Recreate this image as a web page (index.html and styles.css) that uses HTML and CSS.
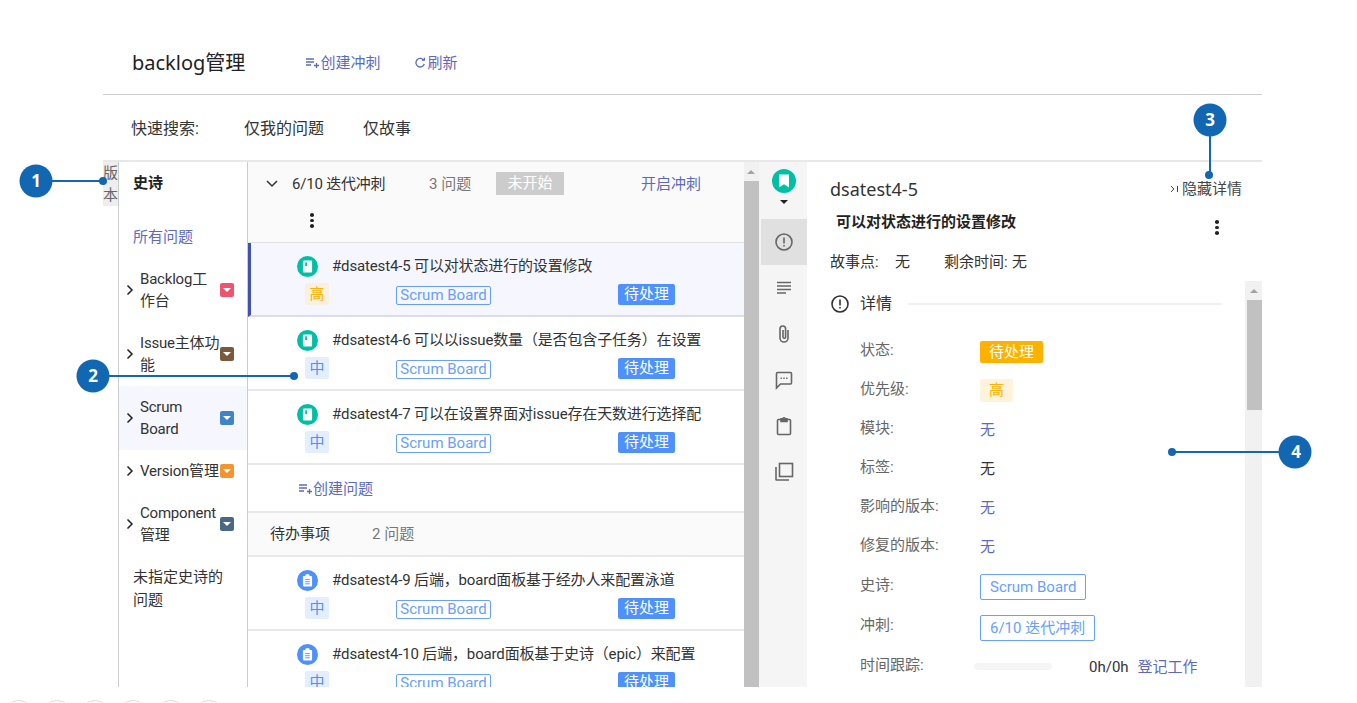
FILE: index.html
```html
<!DOCTYPE html>
<html lang="zh">

<head>
    <meta charset="utf-8">
    <title>backlog管理</title>
    <link rel="stylesheet" href="styles.css">
</head>

<body>
    <div class="page">
        <header class="page__head">
            <h1 class="page__title">backlog管理</h1>
            <a class="head-link head-link--sprint">
                <svg class="head-link__icon" width="14" height="14" viewBox="0 0 14 14">
                    <path d="M1 3h8M1 6h8M1 9h5M9 9.5h5M11.500 7v5" fill="none" stroke="currentColor" stroke-width="1.300" />
                </svg>创建冲刺
            </a>
            <a class="head-link">
                <svg class="head-link__icon" width="12" height="14" viewBox="0 0 12 14">
                    <path d="M9.800 4.300A4.300 4.300 0 1 0 10.300 8" fill="none" stroke="currentColor" stroke-width="1.300" />
                    <path d="M7.500 4.800h3.500V1.300z" fill="currentColor" />
                </svg>刷新
            </a>
        </header>

        <div class="quick-search">
            <span class="quick-search__label">快速搜索:</span>
            <span class="quick-search__item">仅我的问题</span>
            <span class="quick-search__item">仅故事</span>
        </div>

        <div class="board">
            <div class="version-tab">版<br>本</div>

            <aside class="epics">
                <div class="epics__title">史诗</div>
                <div class="epics__all">所有问题</div>
                <div class="epic">
                    <svg class="epic__arrow" width="8" height="12" viewBox="0 0 8 12"><path d="M1.500 1.500 6 6l-4.500 4.500" /></svg>
                    <span class="epic__name">Backlog工<br>作台</span>
                    <span class="epic__chip epic__chip--red"></span>
                </div>
                <div class="epic">
                    <svg class="epic__arrow" width="8" height="12" viewBox="0 0 8 12"><path d="M1.500 1.500 6 6l-4.500 4.500" /></svg>
                    <span class="epic__name">Issue主体功<br>能</span>
                    <span class="epic__chip epic__chip--brown"></span>
                </div>
                <div class="epic epic--active">
                    <svg class="epic__arrow" width="8" height="12" viewBox="0 0 8 12"><path d="M1.500 1.500 6 6l-4.500 4.500" /></svg>
                    <span class="epic__name">Scrum<br>Board</span>
                    <span class="epic__chip epic__chip--blue"></span>
                </div>
                <div class="epic">
                    <svg class="epic__arrow" width="8" height="12" viewBox="0 0 8 12"><path d="M1.500 1.500 6 6l-4.500 4.500" /></svg>
                    <span class="epic__name">Version管理</span>
                    <span class="epic__chip epic__chip--orange"></span>
                </div>
                <div class="epic">
                    <svg class="epic__arrow" width="8" height="12" viewBox="0 0 8 12"><path d="M1.500 1.500 6 6l-4.500 4.500" /></svg>
                    <span class="epic__name">Component<br>管理</span>
                    <span class="epic__chip epic__chip--slate"></span>
                </div>
                <div class="epics__none">未指定史诗的问题</div>
            </aside>

            <main class="issues">
                <section class="sprint-head">
                    <div class="sprint-head__row">
                        <svg class="sprint-head__arrow" width="12" height="8" viewBox="0 0 12 8"><path d="M1 1l5 5 5-5" /></svg>
                        <span class="sprint-head__name">6/10 迭代冲刺</span>
                        <span class="sprint-head__count">3 问题</span>
                        <span class="sprint-head__state">未开始</span>
                        <a class="sprint-head__start">开启冲刺</a>
                    </div>
                    <div class="dots dots--sprint"><i></i><i></i><i></i></div>
                </section>

                <article class="issue issue--selected">
                    <div class="issue__line">
                        <span class="type type--story"><svg width="12" height="14" viewBox="0 0 12 14"><path d="M1 1.500A1 1 0 0 1 2 .500h8a1 1 0 0 1 1 1v11a1 1 0 0 1-1 1H2a1 1 0 0 1-1-1z" fill="#fff" /><rect x="3.500" y="2.500" width="2" height="4" fill="#00bfa5" /></svg></span>
                        <span class="issue__title">#dsatest4-5 可以对状态进行的设置修改</span>
                    </div>
                    <div class="issue__meta">
                        <span class="prio prio--high prio--tint">高</span>
                        <span class="tag tag--epic">Scrum Board</span>
                        <span class="status">待处理</span>
                    </div>
                </article>
                <article class="issue">
                    <div class="issue__line">
                        <span class="type type--story"><svg width="12" height="14" viewBox="0 0 12 14"><path d="M1 1.500A1 1 0 0 1 2 .500h8a1 1 0 0 1 1 1v11a1 1 0 0 1-1 1H2a1 1 0 0 1-1-1z" fill="#fff" /><rect x="3.500" y="2.500" width="2" height="4" fill="#00bfa5" /></svg></span>
                        <span class="issue__title">#dsatest4-6 可以以issue数量（是否包含子任务）在设置</span>
                    </div>
                    <div class="issue__meta">
                        <span class="prio prio--mid">中</span>
                        <span class="tag tag--epic">Scrum Board</span>
                        <span class="status">待处理</span>
                    </div>
                </article>
                <article class="issue">
                    <div class="issue__line">
                        <span class="type type--story"><svg width="12" height="14" viewBox="0 0 12 14"><path d="M1 1.500A1 1 0 0 1 2 .500h8a1 1 0 0 1 1 1v11a1 1 0 0 1-1 1H2a1 1 0 0 1-1-1z" fill="#fff" /><rect x="3.500" y="2.500" width="2" height="4" fill="#00bfa5" /></svg></span>
                        <span class="issue__title">#dsatest4-7 可以在设置界面对issue存在天数进行选择配</span>
                    </div>
                    <div class="issue__meta">
                        <span class="prio prio--mid">中</span>
                        <span class="tag tag--epic">Scrum Board</span>
                        <span class="status">待处理</span>
                    </div>
                </article>

                <div class="add-issue">
                    <a class="head-link">
                        <svg class="head-link__icon" width="14" height="14" viewBox="0 0 14 14">
                            <path d="M1 3h8M1 6h8M1 9h5M9 9.500h5M11.500 7v5" fill="none" stroke="currentColor" stroke-width="1.300" />
                        </svg>创建问题
                    </a>
                </div>

                <section class="backlog-head">
                    <span class="backlog-head__name">待办事项</span>
                    <span class="sprint-head__count">2 问题</span>
                </section>

                <article class="issue">
                    <div class="issue__line">
                        <span class="type type--task"><svg width="12" height="14" viewBox="0 0 12 14"><path d="M1 3a1 1 0 0 1 1-1h1.500a2.500 2 0 0 1 5 0H10a1 1 0 0 1 1 1v9.500a1 1 0 0 1-1 1H2a1 1 0 0 1-1-1z" fill="#fff" /><path d="M3.500 6h5M3.500 8.300h5M3.500 10.600h5" stroke="#4d90fe" /></svg></span>
                        <span class="issue__title">#dsatest4-9 后端，board面板基于经办人来配置泳道</span>
                    </div>
                    <div class="issue__meta">
                        <span class="prio prio--mid">中</span>
                        <span class="tag tag--epic">Scrum Board</span>
                        <span class="status">待处理</span>
                    </div>
                </article>
                <article class="issue">
                    <div class="issue__line">
                        <span class="type type--task"><svg width="12" height="14" viewBox="0 0 12 14"><path d="M1 3a1 1 0 0 1 1-1h1.500a2.500 2 0 0 1 5 0H10a1 1 0 0 1 1 1v9.500a1 1 0 0 1-1 1H2a1 1 0 0 1-1-1z" fill="#fff" /><path d="M3.500 6h5M3.500 8.300h5M3.500 10.600h5" stroke="#4d90fe" /></svg></span>
                        <span class="issue__title">#dsatest4-10 后端，board面板基于史诗（epic）来配置</span>
                    </div>
                    <div class="issue__meta">
                        <span class="prio prio--mid">中</span>
                        <span class="tag tag--epic">Scrum Board</span>
                        <span class="status">待处理</span>
                    </div>
                </article>
            </main>

            <div class="scrollbar scrollbar--list">
                <span class="scrollbar__arrow"></span>
                <span class="scrollbar__thumb scrollbar__thumb--list"></span>
            </div>

            <nav class="rail">
                <div class="rail__type">
                    <span class="rail__badge"><svg width="12" height="14" viewBox="0 0 12 14"><path d="M1 .500h10v13L6 10.300 1 13.500z" fill="#fff" /></svg></span>
                    <span class="rail__caret"></span>
                </div>
                <div class="rail__item rail__item--active">
                    <svg width="20" height="20" viewBox="0 0 20 20"><circle cx="10" cy="10" r="8" /><path d="M10 5.500v6M10 13v1.500" /></svg>
                </div>
                <div class="rail__item">
                    <svg width="20" height="20" viewBox="0 0 20 20"><path d="M3 4.500h14M3 8h14M3 11.500h14M3 15h9" /></svg>
                </div>
                <div class="rail__item">
                    <svg width="20" height="20" viewBox="0 0 20 20"><path d="M14 6v8a4 4 0 0 1-8 0V4.800a2.800 2.800 0 0 1 5.600 0V13a1.300 1.300 0 0 1-2.600 0V6" /></svg>
                </div>
                <div class="rail__item">
                    <svg width="20" height="20" viewBox="0 0 20 20"><path d="M2.500 18V3.500a1 1 0 0 1 1-1h13a1 1 0 0 1 1 1V13a1 1 0 0 1-1 1H6.500z" /><path d="M6.500 8.300h1.400M9.300 8.300h1.400M12.100 8.300h1.400" /></svg>
                </div>
                <div class="rail__item">
                    <svg width="20" height="20" viewBox="0 0 20 20"><path d="M7 3.500H4.500a1 1 0 0 0-1 1v13a1 1 0 0 0 1 1h11a1 1 0 0 0 1-1v-13a1 1 0 0 0-1-1H13" /><path d="M7 5.500V2.800h2a1 1 0 0 1 2 0h2v2.700z" fill="#666" /></svg>
                </div>
                <div class="rail__item">
                    <svg width="20" height="20" viewBox="0 0 20 20"><rect x="5.500" y="1.500" width="13" height="13" /><path d="M2 5v12.500a.5.500 0 0 0 .5.500H15" /></svg>
                </div>
            </nav>

            <div class="detail">
                <div class="detail__top">
                    <span class="detail__key">dsatest4-5</span>
                    <a class="detail__hide">
                        <svg width="9" height="8" viewBox="0 0 9 8"><path d="M1 1l2.800 3L1 7M7.500 1v6" /></svg>隐藏详情
                    </a>
                </div>
                <div class="detail__titlebar">
                    <span class="detail__title">可以对状态进行的设置修改</span>
                    <div class="dots"><i></i><i></i><i></i></div>
                </div>
                <div class="detail__stats">
                    <span class="detail__stat">故事点:</span><span class="detail__statval">无</span>
                    <span class="detail__stat detail__stat--time">剩余时间:</span><span>无</span>
                </div>
                <div class="detail__scroll">
                    <div class="fields">
                        <div class="fields__head">
                            <svg width="20" height="20" viewBox="0 0 20 20"><circle cx="10" cy="10" r="8" /><path d="M10 5.500v6M10 13v1.500" /></svg>
                            <span class="fields__title">详情</span>
                            <span class="fields__rule"></span>
                        </div>
                        <div class="field"><span class="field__label">状态:</span><span class="status status--todo">待处理</span></div>
                        <div class="field"><span class="field__label">优先级:</span><span class="prio prio--high prio--big">高</span></div>
                        <div class="field"><span class="field__label">模块:</span><a class="field__link">无</a></div>
                        <div class="field"><span class="field__label">标签:</span><span>无</span></div>
                        <div class="field"><span class="field__label">影响的版本:</span><a class="field__link">无</a></div>
                        <div class="field"><span class="field__label">修复的版本:</span><a class="field__link">无</a></div>
                        <div class="field field--tag"><span class="field__label">史诗:</span><span class="tag tag--field">Scrum Board</span></div>
                        <div class="field field--tag"><span class="field__label">冲刺:</span><span class="tag tag--field">6/10 迭代冲刺</span></div>
                        <div class="field">
                            <span class="field__label">时间跟踪:</span>
                            <span class="timebar"></span>
                            <span class="timebar__text">0h/0h</span>
                            <a class="field__link">登记工作</a>
                        </div>
                    </div>
                    <div class="scrollbar scrollbar--detail">
                        <span class="scrollbar__arrow"></span>
                        <span class="scrollbar__thumb"></span>
                    </div>
                </div>
            </div>
        </div>
    </div>

    <div class="steps">
        <span></span><span></span><span></span><span></span><span></span><span></span>
    </div>

    <!-- numbered callouts sitting on top of the screenshot -->
    <svg class="callouts" width="1357" height="703" viewBox="0 0 1357 703">
        <g class="callouts__mark">
            <path d="M36 181H103M93 376H294M1210 120V175M1295 452H1172" />
            <circle cx="36" cy="181" r="16.500" />
            <circle cx="103" cy="181" r="4" />
            <circle cx="93" cy="376" r="16.500" />
            <circle cx="294" cy="376" r="4" />
            <circle cx="1210" cy="120" r="16.500" />
            <circle cx="1209" cy="175" r="4" />
            <circle cx="1295" cy="452" r="16.500" />
            <circle cx="1172" cy="452" r="4" />
        </g>
        <g class="callouts__num">
            <text x="36" y="187">1</text>
            <text x="93" y="382">2</text>
            <text x="1210" y="126">3</text>
            <text x="1296" y="458">4</text>
        </g>
    </svg>
</body>

</html>
```

FILE: styles.css
```css
*,
*::after,
*::before {
    box-sizing: border-box;
}

body {
    margin: 0;
    height: 703px;
    overflow: hidden;
    position: relative;
    background: #fff;
    color: #333;
    font-family: Roboto, "Noto Sans CJK SC", sans-serif;
    font-size: 15px;
    line-height: 22px;
}

a {
    color: #3f51b5;
}

.page {
    width: 1159px;
    height: 687px;
    margin-left: 103px;
    display: flex;
    flex-direction: column;
    overflow: hidden;
}

.page__head {
    height: 95px;
    flex: none;
    display: flex;
    align-items: center;
    padding: 31px 0 0 29px;
    border-bottom: 1px solid #ccc;
}

.page__title {
    margin: 0 60px 0 0;
    font-family: "Noto Sans", "Noto Sans CJK SC", sans-serif;
    font-size: 20px;
    font-weight: 400;
    color: #222;
}

.head-link {
    display: inline-flex;
    align-items: center;
    color: #3f51b5;
    opacity: .85;
}

.head-link--sprint {
    margin-right: 34px;
}

.head-link__icon {
    margin-right: 1px;
}

.quick-search {
    height: 67px;
    flex: none;
    display: flex;
    align-items: center;
    padding: 2px 0 0 28px;
    border-bottom: 2px solid #e8e8e8;
    font-size: 16px;
}

.quick-search__label {
    margin-right: 45px;
}

.quick-search__item {
    margin-right: 39px;
}

.board {
    flex: 1;
    min-height: 0;
    display: flex;
}

.version-tab {
    width: 15px;
    height: 44px;
    flex: none;
    background: #eee;
    color: #666;
    text-align: center;
}

.epics {
    width: 130px;
    flex: none;
    border-left: 1px solid #ccc;
    border-right: 1px solid #ccc;
}

.epics__title {
    padding: 10px 0 0 14px;
    font-weight: 700;
    color: #222;
}

.epics__all {
    padding: 32px 0 10px 14px;
    color: #3f51b5;
    opacity: .85;
}

.epics__none {
    padding: 10px 14px;
    line-height: 23px;
}

.epic {
    display: flex;
    align-items: center;
    padding: 10px 13px 10px 7px;
    min-height: 42px;
}

.epic--active {
    background: #f5f6fe;
}

.epic__arrow {
    flex: none;
    fill: none;
    stroke: #222;
    stroke-width: 1.500;
}

.epic__name {
    width: 80px;
    margin-left: 6px;
    margin-right: 1px;
    white-space: nowrap;
    letter-spacing: -.2px;
}

.epic__chip {
    width: 14px;
    height: 14px;
    flex: none;
    border-radius: 2px;
    position: relative;
}

/* little white caret inside the epic colour chip */
.epic__chip::after {
    content: "";
    position: absolute;
    left: 3px;
    top: 5px;
    border: 4px solid transparent;
    border-top: 4px solid #fff;
    border-bottom: 0;
}

.epic__chip--red {
    background: #f0536e;
}

.epic__chip--brown {
    background: #7b5a3c;
}

.epic__chip--blue {
    background: #3f84c8;
}

.epic__chip--orange {
    background: #f7932e;
}

.epic__chip--slate {
    background: #4a6785;
}

.issues {
    width: 496px;
    flex: none;
    overflow: hidden;
}

.sprint-head {
    height: 81px;
    background: #fafafa;
    border-bottom: 1px solid #e0e0e0;
    padding: 10px 0 0 18px;
}

.sprint-head__row {
    display: flex;
    align-items: center;
    height: 23px;
}

.sprint-head__arrow {
    flex: none;
    fill: none;
    stroke: #333;
    stroke-width: 1.500;
    margin-right: 14px;
}

.sprint-head__name {
    width: 137px;
    letter-spacing: -.2px;
}

.sprint-head__count {
    width: 67px;
    color: #777;
}

.sprint-head__state {
    width: 68px;
    height: 23px;
    background: #ccc;
    color: #fff;
    text-align: center;
    line-height: 23px;
}

.sprint-head__start {
    margin-left: 77px;
    color: #3f51b5;
    opacity: .85;
}

.dots {
    display: flex;
    flex-direction: column;
    gap: 2px;
    width: 4px;
}

.dots i {
    width: 4px;
    height: 3.500px;
    border-radius: 50%;
    background: #222;
}

.dots--sprint {
    margin: 18px 0 0 44px;
}

.issue {
    height: 74px;
    border-bottom: 2px solid #e8e8e8;
    padding: 13px 0 0 49px;
}

.issue--selected {
    background: #f5f6fe;
    border-left: 3px solid #3f51b5;
    border-bottom-color: #dcdcec;
    padding-left: 46px;
}

.issue__line {
    display: flex;
    align-items: center;
    height: 20px;
}

.issue__title {
    margin-left: 14px;
    white-space: nowrap;
    letter-spacing: -.15px;
}

.type {
    width: 21px;
    height: 21px;
    flex: none;
    border-radius: 50%;
    display: flex;
    align-items: center;
    justify-content: center;
}

.type svg {
    width: 11px;
    height: 13px;
}

.type--story {
    background: #00bfa5;
}

.type--task {
    background: #4d90fe;
}

.issue__meta {
    display: flex;
    align-items: center;
    height: 24px;
    margin: 6px 0 0 8px;
}

.prio {
    width: 24px;
    height: 22px;
    line-height: 22px;
    text-align: center;
    border-radius: 2px;
    flex: none;
}

.prio--high {
    background: #fff3dc;
    color: #ffb100;
}

.prio--tint {
    background: #faf0e2;
}

.prio--mid {
    background: #e3eeff;
    color: #4d90fe;
}

.prio--big {
    width: 33px;
    height: 23px;
    line-height: 23px;
}

.tag {
    border: 1px solid #4d90fe;
    border-radius: 2px;
    color: #4d90fe;
    white-space: nowrap;
}

.tag--epic {
    width: 95px;
    height: 19px;
    line-height: 17px;
    text-align: center;
    margin: 2px 0 0 67px;
    opacity: .85;
}

.tag--epic ~ .status {
    margin-left: 127px;
}

.tag--field {
    height: 26px;
    line-height: 24px;
    padding: 0 9px;
    margin-top: 2px;
    opacity: .85;
}

.status {
    width: 57px;
    height: 21px;
    flex: none;
    line-height: 21px;
    text-align: center;
    background: #4d90fe;
    color: #fff;
    border-radius: 2px;
}

.status--todo {
    width: 63px;
    height: 22px;
    line-height: 22px;
    background: #ffb100;
}

.add-issue {
    height: 48px;
    display: flex;
    align-items: center;
    padding: 2px 0 0 50px;
    border-bottom: 2px solid #e8e8e8;
}

.backlog-head {
    height: 44px;
    display: flex;
    align-items: center;
    padding-left: 22px;
    background: #fafafa;
    border-bottom: 2px solid #e8e8e8;
}

.backlog-head__name {
    width: 102px;
}

.scrollbar {
    flex: none;
    background: #f1f1f1;
    display: flex;
    flex-direction: column;
    align-items: flex-end;
}

.scrollbar--list {
    width: 15px;
}

.scrollbar--detail {
    width: 17px;
}

.scrollbar__arrow {
    flex: none;
    margin: 8px 4px 7px;
    border: 4px solid transparent;
    border-bottom: 4px solid #a3a3a3;
    border-top: 0;
}

.scrollbar__thumb {
    width: 15px;
    height: 110px;
    background: #c1c1c1;
}

.scrollbar__thumb--list {
    flex: 1;
}

.rail {
    width: 48px;
    flex: none;
    padding-left: 2px;
    background: #f5f5f5;
    display: flex;
    flex-direction: column;
    align-items: center;
}

.rail__type {
    height: 57px;
    padding-top: 7px;
    display: flex;
    flex-direction: column;
    align-items: center;
}

.rail__badge {
    width: 24px;
    height: 24px;
    border-radius: 50%;
    background: #00bfa5;
    display: flex;
    align-items: center;
    justify-content: center;
}

.rail__caret {
    margin-top: 7px;
    border: 4px solid transparent;
    border-top: 4px solid #222;
    border-bottom: 0;
}

.rail__item {
    width: 46px;
    height: 46px;
    display: flex;
    align-items: center;
    justify-content: center;
}

.rail__item--active {
    background: #e0e0e0;
}

.rail__item svg,
.fields__head svg {
    fill: none;
    stroke: #666;
    stroke-width: 1.600;
}

.detail {
    flex: 1;
    min-width: 0;
    display: flex;
    flex-direction: column;
    background: #fff;
}

.detail__top {
    display: flex;
    justify-content: space-between;
    align-items: center;
    height: 24px;
    margin-top: 15px;
    padding: 0 20px 0 23px;
}

.detail__key {
    font-family: "Noto Sans", sans-serif;
    font-size: 18px;
}

.detail__hide {
    display: inline-flex;
    align-items: center;
    color: #444;
}

.detail__hide svg {
    margin-right: 3px;
    fill: none;
    stroke: #444;
    stroke-width: 1;
}

.detail__titlebar {
    display: flex;
    justify-content: space-between;
    height: 26px;
    margin-top: 10px;
    padding: 0 43px 0 29px;
}

.detail__title {
    font-weight: 700;
    color: #222;
}

.detail__titlebar .dots {
    margin-top: 9px;
}

.detail__stats {
    height: 22px;
    margin-top: 14px;
    padding-left: 23px;
    display: flex;
}

.detail__stat {
    width: 65px;
}

.detail__stat--time {
    width: 68px;
}

.detail__statval {
    width: 49px;
}

.detail__scroll {
    flex: 1;
    min-height: 0;
    display: flex;
    margin-top: 8px;
}

.fields {
    flex: 1;
    min-width: 0;
    padding-left: 23px;
}

.fields__head {
    display: flex;
    align-items: center;
    height: 24px;
    margin: 11px 0 16px;
    gap: 10px;
}

.fields__head svg {
    stroke: #333;
}

.fields__title {
    font-size: 16px;
}

.fields__rule {
    width: 314px;
    height: 2px;
    background: #f0f0f0;
    margin-left: 6px;
}

.field {
    display: flex;
    align-items: center;
    height: 39px;
    padding-left: 30px;
}

.field--tag {
    height: 40.500px;
}

.field__label {
    width: 120px;
    flex: none;
    padding-bottom: 3px;
    color: #666;
}

.field__link {
    color: #3f51b5;
    opacity: .85;
}

.timebar {
    width: 78px;
    height: 7px;
    margin-left: -6px;
    border-radius: 4px;
    background: #f5f5f5;
}

.timebar__text {
    margin: 0 9px 0 37px;
}

.steps {
    display: flex;
    gap: 8px;
    height: 16px;
    padding: 13px 0 0 4px;
    overflow: hidden;
}

.steps span {
    width: 30px;
    height: 30px;
    flex: none;
    border: 1px solid #ddd;
    border-radius: 50%;
}

.callouts {
    position: absolute;
    left: 0;
    top: 0;
    pointer-events: none;
}

.callouts__mark {
    fill: #1167b1;
    stroke: none;
}

.callouts__mark path {
    fill: none;
    stroke: #1167b1;
    stroke-width: 2;
}

.callouts__num {
    fill: #fff;
    font-family: "Open Sans", sans-serif;
    font-size: 17px;
    font-weight: 700;
    text-anchor: middle;
}
```
